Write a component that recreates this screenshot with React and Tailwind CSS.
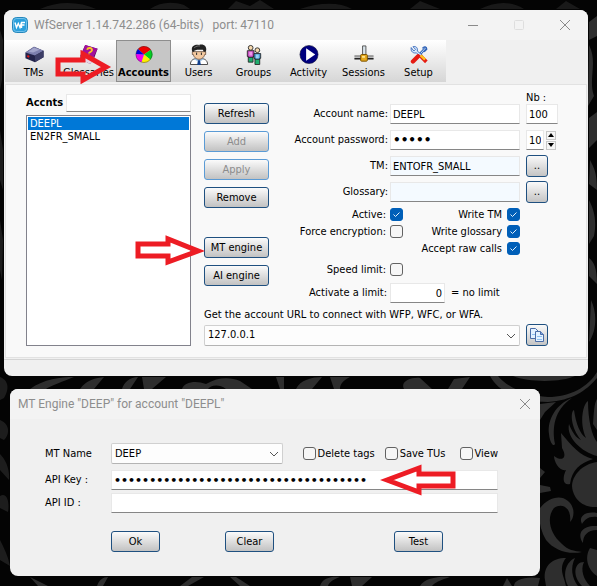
import { useState } from "react";

const URLS = ["127.0.0.1"];
const ENGINES = ["DEEP"];
const ACCOUNTS = ["DEEPL", "EN2FR_SMALL"];

const fieldClass =
  "w-full min-w-0 border border-[#e8e8e8] border-b-[#868686] px-[2px] outline-none";
const dotsClass = "font-['DejaVu_Sans'] font-bold";
const smallButton =
  "flex items-center justify-center size-[22px] shrink-0 rounded-[3px] border border-[#1f5080] bg-linear-to-b from-[#fafafa] to-[#c4c4c4]";

function Wallpaper() {
  return (
    <svg
      className="absolute inset-0 w-full h-full"
      viewBox="0 0 597 586"
      preserveAspectRatio="xMidYMid slice"
      fill="#2e2e2e"
      aria-hidden="true"
    >
      <rect width="597" height="586" fill="#040404" />
      <path d="M498 376C510 390 530 396 548 397C570 397 588 387 597 372V378C585 392 572 400 548 402C522 402 500 394 490 376Z" />
      <path d="M513 376C530 383 563 382 575 376Z" />
      <path d="M540 404L556 402L545 412L540 420Z" />
      <path d="M572 398C556 404 547 420 549 434C550 444 554 447 555 444C552 428 554 410 572 398Z" />
      <path d="M597 456C582 452 566 438 569 424C572 432 576 438 581 440C571 428 570 412 574 410C576 424 580 434 586 438C579 422 583 404 588 401C588 420 592 436 597 442Z" />
      <path d="M593 424C594 412 594 404 597 399V430Z" />
      <path d="M561 433C572 446 580 456 593 459C580 463 572 470 570 484C563 486 562 478 566 470C560 472 554 462 554 456C562 462 568 458 562 448Z" />
      <path d="M597 462C582 464 572 476 572 486C573 500 584 508 597 507Z" />
      <path d="M540 468L545 472L540 478ZM540 485L550 487L551 491L540 493Z" />
      <path d="M540 508C548 498 560 494 568 501C576 508 574 518 570 522C572 508 562 502 554 508C546 518 550 534 562 544C568 550 574 551 582 552C568 555 554 550 546 540C540 530 538 518 540 508Z" />
      <path d="M582 524C578 516 586 511 597 513V517C588 516 585 520 582 524ZM583 543C576 532 584 525 597 526V530C587 530 583 536 583 543Z" />
      <path d="M545 580C543 566 552 558 566 558C558 568 564 576 566 586H546ZM568 586C562 574 566 562 575 558C570 568 572 578 578 586ZM582 586C572 576 574 562 584 562C580 570 584 580 590 586ZM590 548C584 558 588 570 597 576V550Z" />
      <path d="M503 586L507 578L512 586ZM514 586C514 580 524 576 540 578L538 586ZM320 586C322 578 332 576 340 577C334 579 329 582 328 586ZM350 577L372 577L362 586L352 586ZM420 586C424 578 440 576 450 577C440 580 434 583 432 586ZM97 586C99 580 103 577 108 577L103 586ZM30 577L48 586H38ZM180 586L192 577H204L188 586ZM236 577L250 586H240L230 577Z" />
      <path d="M589 45C598 62 588 80 594 96L588 106ZM589 118L597 112V140L589 148ZM590 160C594 168 597 172 597 190L589 184ZM589 200C594 210 597 220 594 236L589 244ZM589 258C594 262 597 268 597 284L589 276ZM591 300C597 312 597 330 589 342ZM589 22L597 16V36L589 40Z" />
      <path d="M30 389C44 379 60 377 74 377C64 381 50 386 46 389ZM80 389C86 380 96 378 104 377L94 389ZM122 389C124 382 130 377 138 377L130 389ZM142 377H166L152 389H144ZM182 389C184 382 196 380 206 384C218 377 230 377 240 381L252 389H226C218 383 210 386 208 389ZM276 377H284V389H280ZM296 389C300 380 312 377 322 377L312 389ZM330 377H350C342 381 340 385 340 389H334ZM404 389C400 382 410 377 420 378L432 389ZM448 389L454 379L470 377L462 389Z" />
      <path d="M0 377C8 380 10 388 4 398L0 400ZM0 420C10 424 10 434 4 440L0 438ZM0 454C6 460 10 470 9 480L0 470ZM0 496C6 492 10 500 8 512L0 508ZM0 540C4 548 8 556 10 566L0 560Z" opacity=".6" />
      <path d="M40 9C60 0 80 2 96 9ZM150 9C160 2 172 1 184 5L190 9ZM228 9L236 1L250 6L260 0L274 9ZM300 9C320 2 340 2 352 9ZM410 9L420 1L440 9ZM480 9C496 1 512 1 524 9ZM556 9L566 1L580 9Z" opacity=".5" />
      <path d="M0 30L3 40L2 80L0 90ZM0 130L3 150V190L0 180ZM0 220L3 240L2 280L0 270Z" opacity=".6" />
    </svg>
  );
}

function TmsIcon() {
  return (
    <svg viewBox="0 0 22 22" className="size-[22px]">
      <path d="M2 9L11 3L21 7V14L12 19L2 15Z" fill="#23234a" />
      <path d="M2 9L11 3L21 7L12 12Z" fill="#7d7fae" />
      <path d="M5 8L11 4L17 6L10 9Z" fill="#a3a5cb" />
      <path d="M12 12L21 7V14L12 19Z" fill="#3c3d66" />
      <path d="M4 12.5L6 13.5" stroke="#e01818" strokeWidth="2" />
    </svg>
  );
}

function GlossariesIcon() {
  return (
    <svg viewBox="0 0 22 22" className="size-[22px]">
      <path d="M7 1L20 5L16 16L12 21L2 15V12Z" fill="#5b0760" />
      <path d="M7 1L20 5L15 15L3 11Z" fill="#a1109c" />
      <path d="M3 12L13 17L16 13V17L12 21L3 16Z" fill="#e6d3e4" />
      <path d="M9 6C10 3 15 4 14 7C13 9 11 8 11 10" stroke="#f7c621" strokeWidth="2" fill="none" />
      <circle cx="10.5" cy="12" r="1.2" fill="#f7c621" />
    </svg>
  );
}

function AccountsIcon() {
  return (
    <svg viewBox="0 0 22 22" className="my-px size-5">
      <path d="M11 11L4 4.500A9.500 9.500 0 0 1 19 5.500Z" fill="#f00000" />
      <path d="M11 11L19 5.500A9.500 9.500 0 0 1 18.500 17Z" fill="#00d020" />
      <path d="M11 11L18.500 17A9.500 9.500 0 0 1 8 20Z" fill="#ffee00" />
      <path d="M11 11L8 20A9.500 9.500 0 0 1 1.500 10.500Z" fill="#f000f0" />
      <path d="M11 11L1.500 10.500A9.500 9.500 0 0 1 4 4.500Z" fill="#0000e0" />
      <circle cx="11" cy="11" r="9.300" fill="none" stroke="#333" strokeWidth=".5" />
    </svg>
  );
}

function UsersIcon() {
  return (
    <svg viewBox="0 0 22 22" className="size-[22px]">
      <path d="M2 21.500C2 17 5 15 11 15S20 17 20 21.500Z" fill="#fff" stroke="#444" />
      <path d="M6 16L11 19L16 16L14 14H8Z" fill="#9ec5e8" />
      <path d="M10 17H12L13 22H9Z" fill="#123f8c" />
      <path d="M4 8H18V11H17C16 15 13 16 11 16S6 15 5 11H4Z" fill="#f3c9a0" stroke="#50301c" strokeWidth=".7" />
      <path d="M4 8C2 3 6 0 11 1C17 -1 20 4 18 8L16 8L15 6L9 6L6 7V8Z" fill="#222" />
      <path d="M6 4C8 2 10 2 12 2" stroke="#777" fill="none" />
      <path d="M8.500 9V11.500M13.500 9V11.500" stroke="#222" />
    </svg>
  );
}

function GroupsIcon() {
  return (
    <svg viewBox="0 0 22 22" className="size-[22px]">
      <g stroke="#222" strokeWidth=".9">
        <path d="M5 12H10V19H5Z" fill="#1fae6e" />
        <path d="M4 7H11V13H10V14H5V13H4Z" fill="#c650c2" />
        <circle cx="7.500" cy="4" r="2.500" fill="#f5d8ae" />
        <path d="M12 15H17V21.500H12Z" fill="#1fae6e" />
        <path d="M11 10H18V15H17V16H12V15H11Z" fill="#4a9bd0" />
        <circle cx="14.500" cy="6.500" r="2.500" fill="#f5d8ae" />
      </g>
      <path d="M6 8H9V12H6Z" fill="#ee9ae8" />
      <path d="M13 11H16V15H13Z" fill="#9bd5f3" />
    </svg>
  );
}

function ActivityIcon() {
  return (
    <svg viewBox="0 0 22 22" className="size-[22px]">
      <circle cx="11" cy="11" r="9.500" fill="#00007e" stroke="#111133" strokeWidth=".6" />
      <path d="M8 4.500L17.500 11L8 17.500Z" fill="#fff" />
    </svg>
  );
}

function SessionsIcon() {
  return (
    <svg viewBox="0 0 22 22" className="size-[22px]">
      <path d="M9.500 2H13V11H9.500Z" fill="#d9e4ea" stroke="#444" strokeWidth=".9" />
      <path d="M1 12.500H21V16H1Z" fill="#bcbcbc" />
      <path d="M1 15.500H21" stroke="#222" strokeWidth="1.500" />
      <path d="M1 12.500H21" stroke="#666" />
      <rect x="7.500" y="11" width="7" height="7" rx="1" fill="#e5a91c" stroke="#7b5200" />
      <path d="M9 12.500H12V14.500H9Z" fill="#ffe693" />
    </svg>
  );
}

function SetupIcon() {
  return (
    <svg viewBox="0 0 22 22" className="my-px size-5">
      <path d="M19 3L10 13" stroke="#2f63b8" strokeWidth="3" />
      <path d="M19 3L10 13" stroke="#d6e8fb" />
      <path d="M2 3C1 8 5 10 8 9L13 14L15 12L9 7C10 3 7 1 4 2L7 5L5 7Z" fill="#d9ecff" stroke="#2f63b8" />
      <path d="M15 4C17 1 20 2 20 5L17 8" fill="none" stroke="#2f63b8" strokeWidth="1.500" />
      <path d="M10 13L4 19" stroke="#e51a12" strokeWidth="5" strokeLinecap="round" />
      <path d="M12 13L14 11L21 18L18 21L11 14Z" fill="#e51a12" />
      <path d="M13 12L18 17" stroke="#ffc11a" strokeWidth="3" />
    </svg>
  );
}

const TOOLS = [
  { label: "TMs", icon: TmsIcon },
  { label: "Glossaries", icon: GlossariesIcon },
  { label: "Accounts", icon: AccountsIcon },
  { label: "Users", icon: UsersIcon },
  { label: "Groups", icon: GroupsIcon },
  { label: "Activity", icon: ActivityIcon },
  { label: "Sessions", icon: SessionsIcon },
  { label: "Setup", icon: SetupIcon },
];

function CloseIcon() {
  return (
    <svg viewBox="0 0 12 12" className="size-3" fill="none" stroke="#8a8a8a">
      <path d="M1 1L11 11M11 1L1 11" />
    </svg>
  );
}

function PushButton({ children, disabled, className = "" }) {
  return (
    <button
      disabled={disabled}
      className={
        "h-[21px] rounded-[3px] border bg-linear-to-b from-[#fbfbfb] to-[#c2c2c2] leading-4 " +
        (disabled ? "border-[#5b9bd5] text-[#8c8c8c] " : "border-[#1f5080] text-black ") +
        className
      }
    >
      {children}
    </button>
  );
}

function Check({ id, label, defaultChecked }) {
  return (
    <span className="relative flex size-[13px] shrink-0">
      <input
        id={id}
        type="checkbox"
        aria-label={label}
        defaultChecked={defaultChecked}
        className="peer size-[13px] appearance-none rounded-[3px] border border-[#626262] bg-[#f6f6f6] checked:border-[#005fb8] checked:bg-[#005fb8]"
      />
      <svg
        viewBox="0 0 13 13"
        className="pointer-events-none absolute inset-0 hidden peer-checked:block"
        fill="none"
        stroke="#e4f0fb"
      >
        <path d="M3.500 6.500L5.500 8.500L9.500 4.500" />
      </svg>
    </span>
  );
}

function Dropdown({ id, options, className = "" }) {
  return (
    <div className={"relative " + className}>
      <select
        id={id}
        className="block h-[21px] w-full appearance-none rounded-[2px] border border-[#d0d0d0] border-b-[#b4b4b4] bg-[#fdfdfd] px-[3px] outline-none"
      >
        {options.map((o) => (
          <option key={o}>{o}</option>
        ))}
      </select>
      <svg
        viewBox="0 0 10 6"
        className="pointer-events-none absolute top-2 right-1 h-[6px] w-[10px]"
        fill="none"
        stroke="#555"
      >
        <path d="M1 1L5 5L9 1" />
      </svg>
    </div>
  );
}

// one line of the account form: right-aligned label, field, optional extra on the right
function FormRow({ id, label, children, extra }) {
  return (
    <div className="flex h-[26px] items-center">
      <label htmlFor={id} className="flex-1 pr-[2px] text-right whitespace-nowrap">
        {label}
      </label>
      <div className="flex w-[130px]">{children}</div>
      <div className="ml-[6px] flex w-8 items-center">{extra}</div>
    </div>
  );
}

function CheckRow({ left, right }) {
  return (
    <div className="flex h-[17px] items-center">
      <label htmlFor={left?.id} className="flex-1 pr-[4px] text-right whitespace-nowrap">
        {left?.label}
      </label>
      <div className="mr-[38px] flex w-[130px] items-center">
        {left && <Check {...left} />}
        {right && (
          <div className="ml-auto flex items-center gap-[5px]">
            <label htmlFor={right.id} className="whitespace-nowrap">
              {right.label}
            </label>
            <Check {...right} />
          </div>
        )}
      </div>
    </div>
  );
}

function AccountForm() {
  return (
    <div className="flex-1">
      <div className="flex h-[10px] items-start justify-end">
        <label htmlFor="nb" className="w-8">
          Nb :
        </label>
      </div>
      <FormRow
        id="name"
        label="Account name:"
        extra={<input id="nb" className={fieldClass + " h-5 bg-white"} defaultValue="100" />}
      >
        <input id="name" className={fieldClass + " h-5 bg-white"} defaultValue="DEEPL" />
      </FormRow>
      <FormRow
        id="password"
        label="Account password:"
        extra={
          <>
            <input
              aria-label="Nb"
              className={fieldClass + " h-5 max-w-[18px] bg-white"}
              defaultValue="10"
            />
            <span className="ml-[2px] flex flex-col gap-px">
              <button
                aria-label="Up"
                className="flex h-[9px] w-[10px] items-center justify-center border border-[#c8c8c8] bg-[#f6f6f6]"
              >
                <svg viewBox="0 0 6 4" className="h-1 w-[6px]">
                  <path d="M0 4L3 0L6 4Z" />
                </svg>
              </button>
              <button
                aria-label="Down"
                className="flex h-[9px] w-[10px] items-center justify-center border border-[#c8c8c8] bg-[#f6f6f6]"
              >
                <svg viewBox="0 0 6 4" className="h-1 w-[6px]">
                  <path d="M0 0L3 4L6 0Z" />
                </svg>
              </button>
            </span>
          </>
        }
      >
        <input
          id="password"
          type="password"
          className={fieldClass + " h-5 bg-white text-[12px] " + dotsClass}
          defaultValue={"•".repeat(5)}
        />
      </FormRow>
      <FormRow id="tm" label="TM:" extra={<button className={smallButton}>..</button>}>
        <input id="tm" className={fieldClass + " h-5 bg-[#f4faff]"} defaultValue="ENTOFR_SMALL" />
      </FormRow>
      <FormRow id="glossary" label="Glossary:" extra={<button className={smallButton}>..</button>}>
        <input id="glossary" className={fieldClass + " h-5 bg-[#f4faff]"} />
      </FormRow>
      <div className="pt-px">
        <CheckRow
          left={{ id: "active", label: "Active:", defaultChecked: true }}
          right={{ id: "write-tm", label: "Write TM", defaultChecked: true }}
        />
        <CheckRow
          left={{ id: "encryption", label: "Force encryption:" }}
          right={{ id: "write-glossary", label: "Write glossary", defaultChecked: true }}
        />
        <CheckRow right={{ id: "raw", label: "Accept raw calls", defaultChecked: true }} />
      </div>
      <div className="pt-1">
        <CheckRow left={{ id: "speed", label: "Speed limit:" }} />
      </div>
      <div className="flex h-[26px] items-center pt-1">
        <label htmlFor="limit" className="flex-1 pr-[3px] text-right whitespace-nowrap">
          Activate a limit:
        </label>
        <div className="flex w-[168px] items-center gap-[6px]">
          <input
            id="limit"
            className={fieldClass + " h-5 max-w-[55px] bg-white text-right"}
            defaultValue="0"
          />
          <span className="whitespace-nowrap">= no limit</span>
        </div>
      </div>
    </div>
  );
}

function ServerWindow() {
  const [selected, setSelected] = useState("DEEPL");
  return (
    <section className="relative overflow-hidden rounded-lg bg-[#f0f0f0]">
      <header className="flex h-[30px] items-center bg-[#f3f3f3] pl-2 font-[Roboto,sans-serif] text-[12px] text-[#8d8d8d]">
        <svg viewBox="0 0 16 16" className="size-4">
          <rect x=".5" y=".5" width="15" height="15" rx="4" fill="#2ba0dc" stroke="#2586bb" />
          <rect x="1.500" y="1.500" width="13" height="13" rx="3" fill="none" stroke="#8fd0f2" strokeWidth=".7" />
          <path d="M3 5.500L4.500 10.500L6.300 6.500L8 10.500L9.500 5.500H13M9.500 8H12.500M9.500 5.500V11" fill="none" stroke="#fff" strokeWidth="1.400" />
        </svg>
        <h1 className="ml-[6px] whitespace-pre">WfServer 1.14.742.286 (64-bits)   port: 47110</h1>
        <div className="ml-auto flex items-center gap-[34px] pr-[17px]">
          <button aria-label="Minimize" className="flex">
            <svg viewBox="0 0 12 12" className="size-3" stroke="#8a8a8a">
              <path d="M1 6.500H11" />
            </svg>
          </button>
          <button aria-label="Maximize" className="flex" disabled>
            <svg viewBox="0 0 12 12" className="size-3" fill="none" stroke="#dedede">
              <rect x="1.500" y="1.500" width="9" height="9" rx="1" />
            </svg>
          </button>
          <button aria-label="Close" className="flex">
            <CloseIcon />
          </button>
        </div>
      </header>

      <nav className="ml-px flex h-[42px] w-fit bg-linear-to-b from-white to-[#d6d6d6] pl-px">
        {TOOLS.map(({ label, icon: Icon }) => (
          <button
            key={label}
            className={
              "flex w-[55px] flex-col items-center border pt-[3px] " +
              (label === "Accounts"
                ? "border-[#8e8e8e] bg-[#c6c6c6] font-bold"
                : "border-transparent")
            }
          >
            <Icon />
            <span className="leading-4 whitespace-nowrap">{label}</span>
          </button>
        ))}
      </nav>

      <main className="mx-px mt-[2px] flex gap-[13px] border border-[#e2e2e2] bg-[#f9f9f9] pt-[6px] pr-7 pb-[11px] pl-5">
        <div className="flex w-[165px] flex-col">
          <div className="flex items-center gap-[3px] pt-[3px]">
            <label htmlFor="accnts" className="font-bold">
              Accnts
            </label>
            <input id="accnts" className={fieldClass + " h-[18px] bg-white"} />
          </div>
          <ul className="mt-[3px] flex-1 border border-[#82828c] bg-white p-px">
            {ACCOUNTS.map((name) => (
              <li key={name}>
                <button
                  onClick={() => setSelected(name)}
                  className={
                    "block h-[13px] w-full px-[2px] text-left leading-[14px] " +
                    (selected === name ? "bg-[#0078d7] text-white" : "")
                  }
                >
                  {name}
                </button>
              </li>
            ))}
          </ul>
        </div>

        <div className="flex-1">
          <div className="flex">
            <div className="flex w-[65px] flex-col gap-[7px] pt-3">
              <PushButton>Refresh</PushButton>
              <PushButton disabled>Add</PushButton>
              <PushButton disabled>Apply</PushButton>
              <PushButton>Remove</PushButton>
              <PushButton className="mt-[22px]">MT engine</PushButton>
              <PushButton>AI engine</PushButton>
            </div>
            <AccountForm />
          </div>
          <label htmlFor="url" className="mt-[3px] block leading-4 whitespace-nowrap">
            Get the account URL to connect with WFP, WFC, or WFA.
          </label>
          <div className="flex items-center pt-px pr-[10px]">
            <Dropdown id="url" options={URLS} className="mr-[6px] flex-1" />
            <button aria-label="Copy" className={smallButton}>
              <svg viewBox="0 0 16 16" className="size-4" fill="#e3f1ff" stroke="#4a6da8">
                <path d="M1.500 1.500H6.500L9.500 4.500V11.500H1.500Z" />
                <path d="M6.500 4.500H11.500L14.500 7.500V14.500H6.500Z" />
                <path d="M11.500 4.500V7.500H14.500" fill="#7fa3dc" />
                <path d="M3 7.500H6M8 9.500H13M8 12.500H13" stroke="#8fc0ef" />
              </svg>
            </button>
          </div>
        </div>
      </main>
      <footer className="mt-px h-[17px] border-t border-[#d4d4d4]" />
    </section>
  );
}

function EngineDialog() {
  return (
    <section className="relative mr-12 ml-[6px] overflow-hidden rounded-lg bg-[#f0f0f0]">
      <header className="flex h-[30px] items-center justify-between bg-[#f3f3f3] pr-[9px] pl-2 font-[Roboto,sans-serif] text-[12px] text-[#8d8d8d]">
        <h2>MT Engine "DEEP" for account "DEEPL"</h2>
        <button aria-label="Close" className="flex">
          <CloseIcon />
        </button>
      </header>
      <div className="flex flex-col gap-[3px] pt-6 pr-[42px] pb-6 pl-[35px]">
        <div className="mb-[3px] flex items-center">
          <label htmlFor="mt-name" className="w-[66px]">
            MT Name
          </label>
          <Dropdown id="mt-name" options={ENGINES} className="w-[172px]" />
          <div className="ml-auto flex items-center gap-[10px] whitespace-nowrap">
            <label className="flex items-center gap-[2px]">
              <Check />
              Delete tags
            </label>
            <label className="flex items-center gap-[2px]">
              <Check />
              Save TUs
            </label>
            <label className="ml-1 flex items-center gap-[2px]">
              <Check />
              View
            </label>
          </div>
        </div>
        <div className="flex items-center">
          <label htmlFor="api-key" className="w-[66px] shrink-0">
            API Key :
          </label>
          <input
            id="api-key"
            type="password"
            className={fieldClass + " h-5 bg-white text-[11px] " + dotsClass}
            defaultValue={"•".repeat(36)}
          />
        </div>
        <div className="flex items-center">
          <label htmlFor="api-id" className="w-[66px] shrink-0">
            API ID :
          </label>
          <input id="api-id" className={fieldClass + " h-5 bg-white"} />
        </div>
        <div className="flex pt-[15px] pr-[55px] pl-[66px]">
          <PushButton className="mr-[65px] w-[49px]">Ok</PushButton>
          <PushButton className="w-[49px]">Clear</PushButton>
          <PushButton className="ml-auto w-[49px]">Test</PushButton>
        </div>
      </div>
    </section>
  );
}

function Arrow({ d, className }) {
  return (
    <svg
      viewBox="0 0 76 34"
      className={"pointer-events-none absolute h-[34px] w-[76px] " + className}
      fill="none"
      stroke="#ed1c24"
      strokeWidth="5"
    >
      <path d={d} />
    </svg>
  );
}

export default function App() {
  return (
    <div className="relative flex min-h-dvh flex-col gap-[13px] bg-black pt-[10px] pr-[9px] pb-[10px] pl-1 font-['DejaVu_Sans_Condensed','DejaVu_Sans',sans-serif] text-[11px] leading-[14px] text-black">
      <Wallpaper />
      <ServerWindow />
      <EngineDialog />
      <Arrow className="top-[50px] left-[55px]" d="M3 10H28V4L51 17L28 30V24H3Z" />
      <Arrow className="top-[234px] left-[135px]" d="M3 10H33V5L63 17L33 28V22H3Z" />
      <Arrow className="top-[463px] left-[380px]" d="M73 11H39V5L7 17L39 29V23H73Z" />
    </div>
  );
}
